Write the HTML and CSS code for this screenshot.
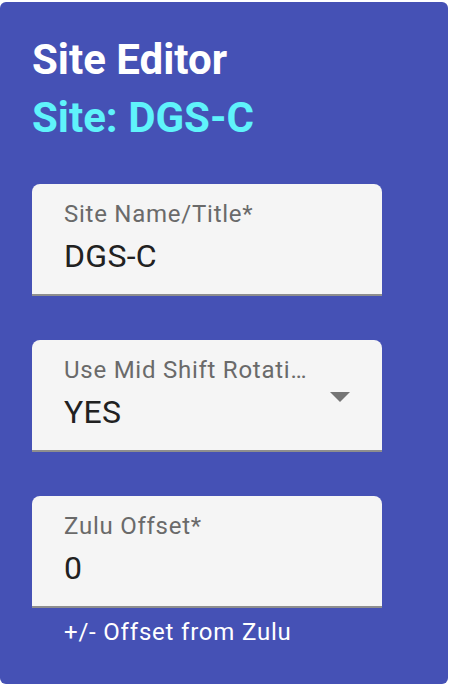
FILE: index.html
```html
<!DOCTYPE html>
<html>
<head>
<meta charset="utf-8">
<link rel="stylesheet" href="styles.css">
</head>
<body>
<div class="panel">
  <div class="titles">
    <div class="title">Site Editor</div>
    <div class="subtitle">Site: DGS-C</div>
  </div>
  <div class="form">
    <div class="field-wrap">
      <div class="field">
        <div class="label">Site Name/Title*</div>
        <div class="value">DGS-C</div>
      </div>
    </div>
    <div class="field-wrap">
      <div class="field select">
        <div class="label">Use Mid Shift Rotati…</div>
        <div class="value">YES</div>
        <svg class="arrow" width="20" height="10" viewBox="0 0 20 10"><path d="M0 0 L10 10 L20 0 Z" fill="#757575"/></svg>
      </div>
    </div>
    <div class="field-wrap">
      <div class="field">
        <div class="label">Zulu Offset*</div>
        <div class="value">0</div>
      </div>
      <div class="helper">+/- Offset from Zulu</div>
    </div>
  </div>
</div>
</body>
</html>
```
FILE: styles.css
```css
html, body {
  margin: 0;
  padding: 0;
  background: #ffffff;
}
body {
  padding-top: 2px;
  font-family: Roboto, "Liberation Sans", sans-serif;
}
.panel {
  width: 448px;
  height: 682px;
  box-sizing: border-box;
  background: #4551b5;
  border-radius: 6px;
  padding: 29px 32px 0 32px;
}
.titles {
  font-size: 42px;
  font-weight: 700;
  line-height: 58px;
}
.title {
  color: #ffffff;
}
.subtitle {
  color: #5ff3fb;
}
.form {
  margin-top: 37px;
  display: flex;
  flex-direction: column;
  gap: 44px;
  width: 350px;
}
.field {
  position: relative;
  height: 112px;
  box-sizing: border-box;
  background: #f5f5f5;
  border-top-left-radius: 8px;
  border-top-right-radius: 8px;
  border-bottom: 2px solid #8e8e8e;
  padding: 16px 32px 0 32px;
}
.label {
  font-size: 24px;
  line-height: 28px;
  color: #6a6a6a;
  letter-spacing: 0.75px;
  white-space: nowrap;
}
.value {
  margin-top: 10px;
  font-size: 32px;
  line-height: 36px;
  color: #212121;
  letter-spacing: 0.3px;
}
.arrow {
  position: absolute;
  right: 32px;
  top: 52px;
}
.helper {
  margin-top: 10px;
  padding-left: 32px;
  font-size: 24px;
  line-height: 28px;
  color: #ffffff;
  letter-spacing: 0.8px;
}
```
